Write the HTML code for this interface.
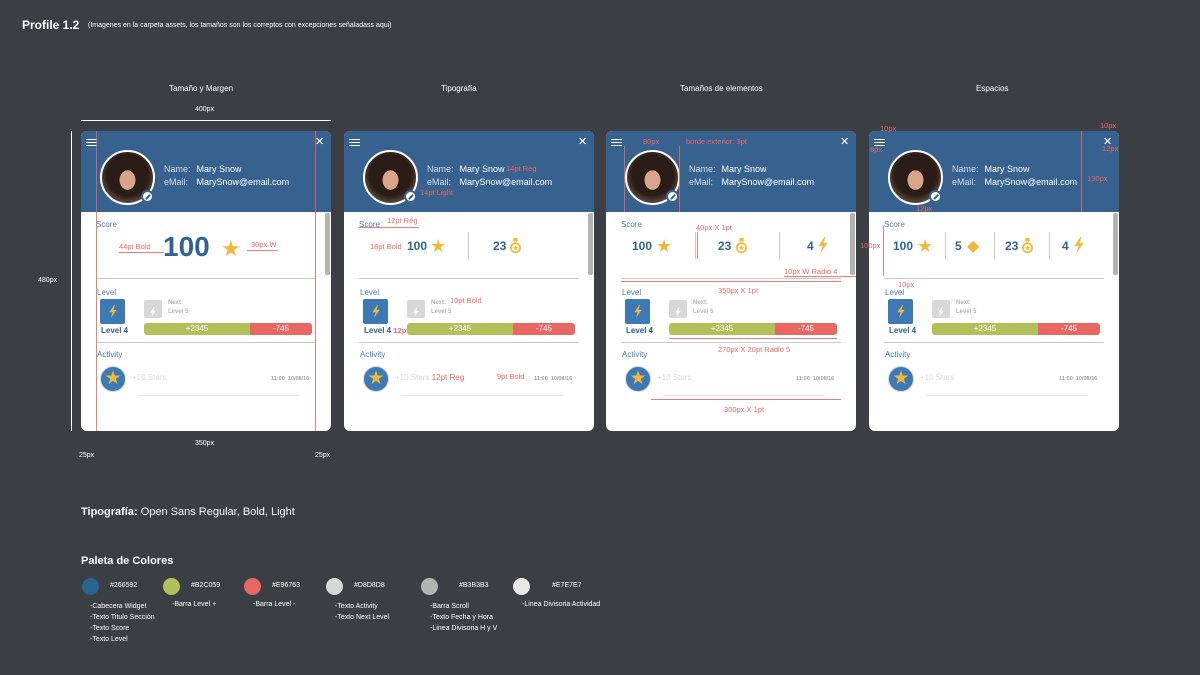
<!DOCTYPE html>
<html><head><meta charset="utf-8"><style>
*{margin:0;padding:0;box-sizing:border-box}
body{width:1200px;height:675px;background:#3b3e43;font-family:"Liberation Sans",sans-serif;position:relative;overflow:hidden;color:#fff}
.a{position:absolute;white-space:nowrap}
.card{position:absolute;top:131px;width:250px;height:300px;background:#fff;border-radius:6px;overflow:hidden}
.hd{position:absolute;left:0;top:0;width:250px;height:81px;background:#37618f}
.hb{position:absolute;left:5px;top:8px;width:11px;height:7px;border-top:1.5px solid #fff;border-bottom:1.5px solid #fff}
.hb:after{content:"";position:absolute;left:0;top:1.5px;width:11px;height:1.5px;background:#fff}
.x{position:absolute;left:234px;top:4px;font-size:11px;color:#fff}
.av{position:absolute;left:19px;top:19px;width:55px;height:55px;border-radius:50%;border:2px solid #fff;background:radial-gradient(ellipse 13px 16px at 50% 55%,#d9a58a 60%,transparent 62%),radial-gradient(circle at 50% 45%,#2a1d18 55%,#6d5a4a 80%)}
.ed{position:absolute;left:60px;top:59px;width:13px;height:13px;border-radius:50%;background:#fff;border:2px solid #37618f}
.ed:after{content:"";position:absolute;left:2px;top:3.5px;width:6px;height:2px;background:#37618f;transform:rotate(-45deg)}
.nm{position:absolute;left:83px;top:32px;font-size:9px;line-height:12.5px;color:#fff}
.nm span{color:#d7dce5;display:inline-block;width:30px}
.lb{position:absolute;font-size:8px;color:#4a7cb0}
.dv{position:absolute;left:15px;width:220px;height:1px;background:#c9c9c9}
.sb{position:absolute;left:244px;top:82px;width:5px;height:62px;background:#b3b3b3;border-radius:2px}
.li{position:absolute;left:19px;top:168px;width:25px;height:25px;background:#3d79b5;border-radius:2px;text-align:center;padding-top:6px}
.l4{position:absolute;left:20px;top:195px;font-size:8px;font-weight:bold;color:#2e5d8e}
.ni{position:absolute;left:63px;top:169px;width:18px;height:18px;background:#d8d8d8;border-radius:2px;text-align:center;padding-top:4px}
.nx{position:absolute;left:87px;top:168px;font-size:6px;line-height:9px;color:#b3b3b3;font-weight:bold}
.bar{position:absolute;left:63px;top:192px;width:168px;height:12px;border-radius:3px;overflow:hidden;font-size:8px;line-height:12px;color:#fff;text-align:center}
.bar .g{position:absolute;left:0;top:0;width:106px;height:12px;background:#b2c059}
.bar .r{position:absolute;left:106px;top:0;width:62px;height:12px;background:#e96763}
.st{position:absolute;left:19px;top:235px;width:26px;height:26px;border-radius:50%;background:#3d79b5;border:1px solid #d8d8d8;color:#f0b93a;font-size:19px;text-align:center;line-height:24px}
.s10{position:absolute;left:51px;top:242px;font-size:8px;color:#d8d8d8}
.tm{position:absolute;left:190px;top:245px;font-size:5.5px;color:#a0a0a0;font-weight:bold}
.al{position:absolute;left:57px;top:264px;width:162px;height:1px;background:#e7e7e7}
.big{position:absolute;font-weight:bold;color:#2e6494}
.star{position:absolute;color:#f0b93a}
.ic{position:absolute}
.vd{position:absolute;top:101px;width:1px;height:27px;background:#c9c9c9}
.red{color:#e96763}
.rl{position:absolute;background:#e96763;opacity:.85}
.ann{position:absolute;font-size:7.5px;color:#e96763;white-space:nowrap}
.t{font-size:8px;color:#fff}
</style></head><body>
<svg width="0" height="0" style="position:absolute"><defs>
<symbol id="bolt" viewBox="0 0 10 16"><path d="M6.5 0 L0.5 9 H4.5 L2.5 16 L9.5 6 H5.5 L7.5 0Z"/></symbol>
<symbol id="medal" viewBox="0 0 12 18"><rect x="3.5" y="0" width="5" height="4" rx="1" fill="#f0b93a"/><circle cx="6" cy="11" r="5.2" fill="none" stroke="#f0b93a" stroke-width="2"/><path d="M6 8 L6.9 10 L9 10.2 L7.4 11.5 L7.9 13.6 L6 12.5 L4.1 13.6 L4.6 11.5 L3 10.2 L5.1 10Z" fill="#f0b93a"/></symbol>
</defs></svg>

<div class="a" style="left:22px;top:18px;font-size:12px;font-weight:bold">Profile 1.2</div>
<div class="a" style="left:88px;top:22px;font-size:7px">(Imagenes en la carpeta assets, los tamaños son los correptos con excepciones señaladass aqui)</div>
<div class="a t" style="left:169px;top:84px">Tamaño y Margen</div>
<div class="a t" style="left:441px;top:84px">Tipografía</div>
<div class="a t" style="left:680px;top:84px">Tamaños de  elementos</div>
<div class="a t" style="left:976px;top:84px">Espacios</div>
<div class="a" style="left:195px;top:106px;font-size:7px">400px</div>
<div class="a" style="left:81px;top:120px;width:250px;height:1px;background:#fff"></div>
<div class="a" style="left:71px;top:131px;width:1px;height:300px;background:#fff"></div>
<div class="a" style="left:38px;top:277px;font-size:7px">480px</div>
<div class="a" style="left:195px;top:440px;font-size:7px">350px</div>
<div class="a" style="left:79px;top:452px;font-size:7px">25px</div>
<div class="a" style="left:315px;top:452px;font-size:7px">25px</div>

<!-- CARD 1 -->
<div class="card" style="left:81px">
<div class="hd"></div><div class="hb"></div><div class="x">✕</div>
<div class="av"></div><div class="ed"></div>
<div class="nm"><span>Name:</span> Mary Snow<br><span>eMail:</span> MarySnow@email.com</div>
<div class="sb"></div>
<div class="lb" style="left:15px;top:89px">Score</div>
<div class="big" style="left:82px;top:100px;font-size:28px">100</div>
<div class="star" style="left:140px;top:105px;font-size:22px">★</div>
<div class="ann" style="left:38px;top:111px">44pt Bold</div><div class="rl" style="left:38px;top:121px;width:45px;height:1px"></div>
<div class="ann" style="left:170px;top:109px">30px W</div><div class="rl" style="left:166px;top:119px;width:31px;height:1px"></div>
<div class="dv" style="top:147px"></div>
<div class="lb" style="left:16px;top:157px">Level</div>
<div class="li"><svg width="8" height="13" fill="#f0b93a"><use href="#bolt"/></svg></div><div class="l4">Level 4</div><div class="ni"><svg width="6" height="10" fill="#fff"><use href="#bolt"/></svg></div>
<div class="nx">Next:<br>Level 5</div>
<div class="bar"><div class="g">+2345</div><div class="r">-745</div></div>
<div class="dv" style="top:211px"></div>
<div class="lb" style="left:16px;top:219px">Activity</div>
<div class="st">★</div><div class="s10">+10 Stars</div><div class="tm">11:00 &nbsp;10/08/16</div><div class="al"></div>
</div>
<div class="rl" style="left:96px;top:131px;width:1px;height:300px"></div>
<div class="rl" style="left:315px;top:131px;width:1px;height:300px"></div>

<!-- CARD 2 -->
<div class="card" style="left:344px">
<div class="hd"></div><div class="hb"></div><div class="x">✕</div>
<div class="av"></div><div class="ed"></div>
<div class="nm"><span>Name:</span> Mary Snow<br><span>eMail:</span> MarySnow@email.com</div>
<div class="ann" style="left:162px;top:33px">14pt Reg</div>
<div class="ann" style="left:76px;top:57px">14pt Light</div>
<div class="sb"></div>
<div class="lb" style="left:15px;top:89px">Score</div>
<div class="ann" style="left:43px;top:85px">12pt Reg</div><div class="rl" style="left:15px;top:96px;width:60px;height:1px"></div>
<div class="ann" style="left:26px;top:111px">18pt Bold</div>
<div class="big" style="left:63px;top:108px;font-size:12px">100</div>
<div class="star" style="left:86px;top:105px;font-size:18px">★</div>
<div class="vd" style="left:124px"></div>
<div class="big" style="left:149px;top:108px;font-size:12px">23</div>
<svg class="ic" style="left:166px;top:107px" width="11" height="16"><use href="#medal"/></svg>
<div class="dv" style="top:147px"></div>
<div class="lb" style="left:16px;top:157px">Level</div>
<div class="li"><svg width="8" height="13" fill="#f0b93a"><use href="#bolt"/></svg></div><div class="l4">Level 4 <span class="ann" style="position:static">12pt Bold</span></div><div class="ni"><svg width="6" height="10" fill="#fff"><use href="#bolt"/></svg></div>
<div class="nx">Next:<br>Level 5</div>
<div class="ann" style="left:106px;top:165px">10pt Bold</div>
<div class="bar"><div class="g">+2345</div><div class="r">-745</div></div>
<div class="dv" style="top:211px"></div>
<div class="lb" style="left:16px;top:219px">Activity</div>
<div class="st">★</div><div class="s10">+10 Stars <span class="red">12pt Reg</span></div><div class="tm">11:00 &nbsp;10/08/16</div>
<div class="ann" style="left:153px;top:241px">9pt Bold</div>
<div class="al"></div>
</div>

<!-- CARD 3 -->
<div class="card" style="left:606px">
<div class="hd"></div><div class="hb"></div><div class="x">✕</div>
<div class="av"></div><div class="ed"></div>
<div class="nm"><span>Name:</span> Mary Snow<br><span>eMail:</span> MarySnow@email.com</div>
<div class="ann" style="left:37px;top:6px">80px</div><div class="ann" style="left:80px;top:6px">borde exterior: 3pt</div>
<div class="rl" style="left:18px;top:15px;width:1px;height:66px"></div><div class="rl" style="left:73px;top:15px;width:1px;height:66px"></div>
<div class="sb"></div>
<div class="lb" style="left:15px;top:89px">Score</div>
<div class="big" style="left:26px;top:108px;font-size:12px">100</div>
<div class="star" style="left:50px;top:105px;font-size:18px">★</div>
<div class="ann" style="left:90px;top:92px">40px X 1pt</div>
<div class="vd" style="left:89px"></div><div class="rl" style="left:91px;top:101px;width:1px;height:27px"></div>
<div class="big" style="left:112px;top:108px;font-size:12px">23</div>
<svg class="ic" style="left:130px;top:107px" width="11" height="16"><use href="#medal"/></svg>
<div class="vd" style="left:173px"></div>
<div class="big" style="left:201px;top:108px;font-size:12px">4</div>
<svg class="ic" style="left:212px;top:106px" width="10" height="16" fill="#f0b93a"><use href="#bolt"/></svg>
<div class="ann" style="left:178px;top:136px">10px W Radio 4</div><div class="rl" style="left:178px;top:145px;width:72px;height:1px"></div>
<div class="dv" style="top:147px"></div><div class="rl" style="left:15px;top:150px;width:220px;height:1px"></div>
<div class="ann" style="left:112px;top:155px">350px X 1pt</div>
<div class="lb" style="left:16px;top:157px">Level</div>
<div class="li"><svg width="8" height="13" fill="#f0b93a"><use href="#bolt"/></svg></div><div class="l4">Level 4</div><div class="ni"><svg width="6" height="10" fill="#fff"><use href="#bolt"/></svg></div>
<div class="nx">Next:<br>Level 5</div>
<div class="bar"><div class="g">+2345</div><div class="r">-745</div></div>
<div class="rl" style="left:63px;top:207px;width:168px;height:1px"></div>
<div class="dv" style="top:211px"></div>
<div class="ann" style="left:112px;top:214px">270px X 20pt Radio 5</div>
<div class="lb" style="left:16px;top:219px">Activity</div>
<div class="st">★</div><div class="s10">+10 Stars</div><div class="tm">11:00 &nbsp;10/08/16</div><div class="al"></div>
<div class="rl" style="left:45px;top:268px;width:190px;height:1px"></div>
<div class="ann" style="left:118px;top:274px">300px X 1pt</div>
</div>

<!-- CARD 4 -->
<div class="card" style="left:869px">
<div class="hd"></div><div class="hb"></div><div class="x">✕</div>
<div class="av"></div><div class="ed"></div>
<div class="nm"><span>Name:</span> Mary Snow<br><span>eMail:</span> MarySnow@email.com</div>
<div class="sb"></div>
<div class="rl" style="left:212px;top:0;width:1px;height:81px"></div>
<div class="lb" style="left:15px;top:89px">Score</div>
<div class="rl" style="left:14px;top:95px;width:1px;height:50px"></div>
<div class="big" style="left:24px;top:108px;font-size:12px">100</div>
<div class="star" style="left:48px;top:105px;font-size:18px">★</div>
<div class="vd" style="left:76px"></div>
<div class="big" style="left:86px;top:108px;font-size:12px">5</div>
<div class="star" style="left:98px;top:105px;font-size:16px;color:#f0b93a">◆</div>
<div class="vd" style="left:125px"></div>
<div class="big" style="left:136px;top:108px;font-size:12px">23</div>
<svg class="ic" style="left:153px;top:107px" width="11" height="16"><use href="#medal"/></svg>
<div class="vd" style="left:180px"></div>
<div class="big" style="left:193px;top:108px;font-size:12px">4</div>
<svg class="ic" style="left:205px;top:106px" width="10" height="16" fill="#f0b93a"><use href="#bolt"/></svg>
<div class="dv" style="top:147px"></div>
<div class="ann" style="left:29px;top:149px">10px</div>
<div class="lb" style="left:16px;top:157px">Level</div>
<div class="li"><svg width="8" height="13" fill="#f0b93a"><use href="#bolt"/></svg></div><div class="l4">Level 4</div><div class="ni"><svg width="6" height="10" fill="#fff"><use href="#bolt"/></svg></div>
<div class="nx">Next:<br>Level 5</div>
<div class="bar"><div class="g">+2345</div><div class="r">-745</div></div>
<div class="dv" style="top:211px"></div>
<div class="lb" style="left:16px;top:219px">Activity</div>
<div class="st">★</div><div class="s10">+10 Stars</div><div class="tm">11:00 &nbsp;10/08/16</div><div class="al"></div>
</div>
<div class="ann" style="left:880px;top:124px">10px</div>
<div class="ann" style="left:870px;top:145px">8px</div>
<div class="ann" style="left:1100px;top:121px">10px</div>
<div class="ann" style="left:1102px;top:144px">12px</div>
<div class="ann" style="left:1087px;top:174px">130px</div>
<div class="ann" style="left:916px;top:204px">12px</div>
<div class="ann" style="left:860px;top:241px">100px</div>

<div class="a" style="left:81px;top:506px;font-size:11px"><b>Tipografía:</b> Open Sans Regular, Bold, Light</div>
<div class="a" style="left:81px;top:555px;font-size:11px;font-weight:bold">Paleta de Colores</div>

<div class="a" style="left:82px;top:578px;width:17px;height:17px;border-radius:50%;background:#266592"></div>
<div class="a" style="left:110px;top:582px;font-size:7px">#266592</div>
<div class="a" style="left:90px;top:601px;font-size:7px;line-height:11px">-Cabecera Widget<br>-Texto Titulo Sección<br>-Texto Score<br>-Texto Level</div>
<div class="a" style="left:163px;top:578px;width:17px;height:17px;border-radius:50%;background:#b2c059"></div>
<div class="a" style="left:191px;top:582px;font-size:7px">#B2C059</div>
<div class="a" style="left:172px;top:601px;font-size:7px">-Barra Level +</div>
<div class="a" style="left:244px;top:578px;width:17px;height:17px;border-radius:50%;background:#e96763"></div>
<div class="a" style="left:272px;top:582px;font-size:7px">#E96763</div>
<div class="a" style="left:253px;top:601px;font-size:7px">-Barra Level -</div>
<div class="a" style="left:326px;top:578px;width:17px;height:17px;border-radius:50%;background:#d8d8d8"></div>
<div class="a" style="left:354px;top:582px;font-size:7px">#D8D8D8</div>
<div class="a" style="left:335px;top:601px;font-size:7px;line-height:11px">-Texto Activity<br>-Texto Next Level</div>
<div class="a" style="left:421px;top:578px;width:17px;height:17px;border-radius:50%;background:#b3b3b3"></div>
<div class="a" style="left:459px;top:582px;font-size:7px">#B3B3B3</div>
<div class="a" style="left:430px;top:601px;font-size:7px;line-height:11px">-Barra Scroll<br>-Texto Fecha y Hora<br>-Linea Divisoria H y V</div>
<div class="a" style="left:513px;top:578px;width:17px;height:17px;border-radius:50%;background:#e7e7e7"></div>
<div class="a" style="left:552px;top:582px;font-size:7px">#E7E7E7</div>
<div class="a" style="left:522px;top:601px;font-size:7px">-Linea Divisoria Actividad</div>
</body></html>
